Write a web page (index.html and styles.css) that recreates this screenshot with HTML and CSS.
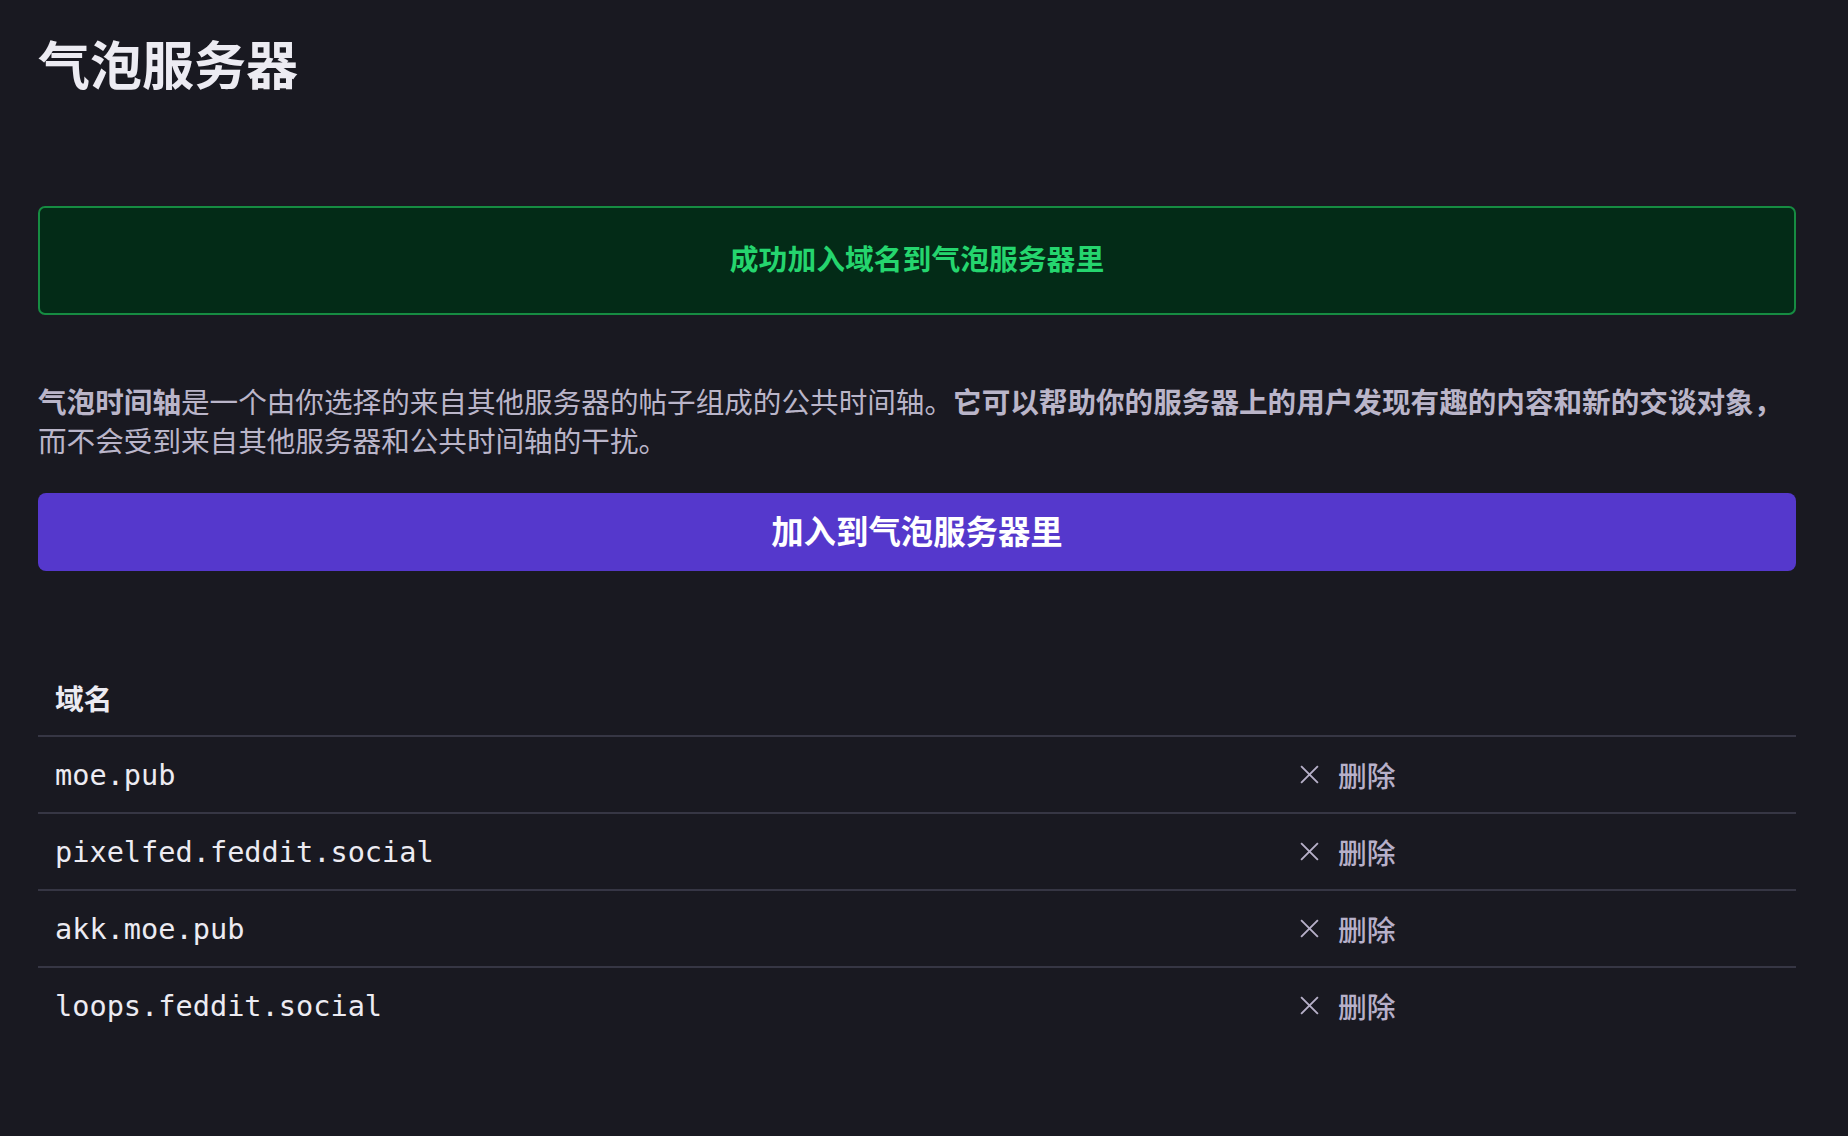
FILE: index.html
```html
<!DOCTYPE html>
<html lang="zh-CN">
<head>
  <meta charset="UTF-8">
  <meta name="viewport" content="width=device-width, initial-scale=1.0">
  <title>气泡服务器</title>
<link rel="stylesheet" href="styles.css">
</head>
<body>
  <main class="settings">
    <h1 class="title">气泡服务器</h1>

    <div class="notice notice-success">成功加入域名到气泡服务器里</div>

    <p class="intro"><strong>气泡时间轴</strong>是一个由你选择的来自其他服务器的帖子组成的公共时间轴。<strong>它可以帮助你的服务器上的用户发现有趣的内容和新的交谈对象，</strong>而不会受到来自其他服务器和公共时间轴的干扰。</p>

    <button type="button" class="btn-primary">加入到气泡服务器里</button>

    <table class="domains">
      <colgroup>
        <col class="col-domain">
        <col class="col-action">
      </colgroup>
      <thead>
        <tr>
          <th>域名</th>
          <th></th>
        </tr>
      </thead>
      <tbody>
        <tr>
          <td class="domain">moe.pub</td>
          <td><button type="button" class="btn-remove"><svg viewBox="0 0 20 20" width="21" height="21"><path d="M2 2L18 18M18 2L2 18"/></svg>删除</button></td>
        </tr>
        <tr>
          <td class="domain">pixelfed.feddit.social</td>
          <td><button type="button" class="btn-remove"><svg viewBox="0 0 20 20" width="21" height="21"><path d="M2 2L18 18M18 2L2 18"/></svg>删除</button></td>
        </tr>
        <tr>
          <td class="domain">akk.moe.pub</td>
          <td><button type="button" class="btn-remove"><svg viewBox="0 0 20 20" width="21" height="21"><path d="M2 2L18 18M18 2L2 18"/></svg>删除</button></td>
        </tr>
        <tr>
          <td class="domain">loops.feddit.social</td>
          <td><button type="button" class="btn-remove"><svg viewBox="0 0 20 20" width="21" height="21"><path d="M2 2L18 18M18 2L2 18"/></svg>删除</button></td>
        </tr>
      </tbody>
    </table>
  </main>
</body>
</html>
```

FILE: styles.css
```css
body {
  font-family: "Noto Sans CJK SC", "Noto Sans", sans-serif;
  margin: 0;
  padding: 0;
  background-color: #191921;
  color: #bab5c9;
}

.settings {
  padding: 0 52px 60px 38px;
}

.title {
  margin: 0;
  padding-top: 32px;
  font-size: 52px;
  line-height: 62px;
  font-weight: 700;
  color: #ecebf2;
}

.notice {
  box-sizing: border-box;
  height: 109px;
  margin-top: 112px;
  padding-bottom: 6px;
  display: flex;
  align-items: center;
  justify-content: center;
  border-radius: 7px;
  font-size: 28.8px;
  font-weight: 700;
}

.notice-success {
  background-color: #032b17;
  border: 2px solid #168c42;
  color: #25d56e;
}

.intro {
  margin: 66px 0 0;
  font-size: 28.6px;
  line-height: 39px;
}

.intro strong {
  font-weight: 700;
}

.btn-primary {
  display: block;
  width: 100%;
  height: 78px;
  margin-top: 34px;
  padding: 0 0 6px;
  background-color: #5538cc;
  color: #fff;
  border: none;
  border-radius: 8px;
  font-family: inherit;
  font-size: 32.4px;
  font-weight: 700;
  cursor: pointer;
}

.domains {
  width: 100%;
  margin-top: 89px;
  border-collapse: collapse;
  table-layout: fixed;
}

.col-domain {
  width: 1244px;
}

.domains th,
.domains td {
  height: 75px;
  padding: 0 17px;
  text-align: left;
  vertical-align: middle;
}

.domains th {
  font-size: 28.8px;
  font-weight: 700;
  color: #ecebf2;
}

.domains tbody tr {
  border-top: 2px solid #363644;
}

.domain {
  font-family: "DejaVu Sans Mono", "Liberation Mono", monospace;
  font-size: 28.6px;
  color: #ecebf2;
}

.btn-remove {
  display: inline-flex;
  align-items: center;
  gap: 18px;
  padding: 0;
  background: none;
  border: none;
  color: #b7b0c9;
  font-family: inherit;
  font-size: 28.8px;
  font-weight: 500;
  cursor: pointer;
}

.btn-remove svg {
  fill: none;
  stroke: currentColor;
  stroke-width: 1.8;
}
```
